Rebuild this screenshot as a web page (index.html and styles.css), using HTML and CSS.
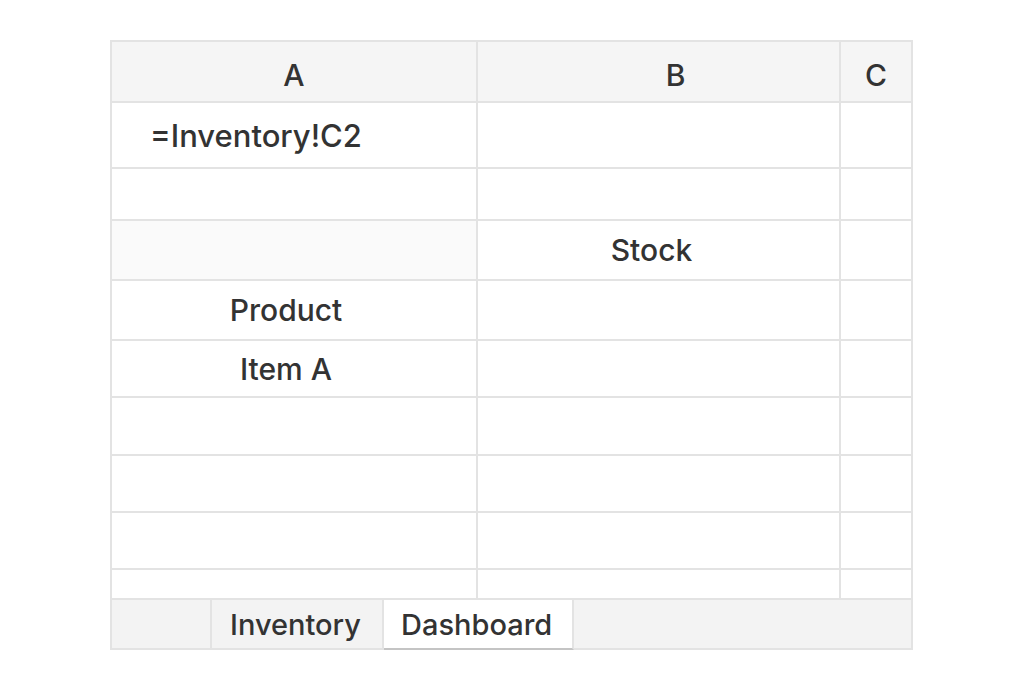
FILE: index.html
```html
<!DOCTYPE html>
<html lang="en">
<head>
  <meta charset="UTF-8">
  <meta name="viewport" content="width=device-width, initial-scale=1.0">
  <title>Dashboard</title>
  <link rel="stylesheet" href="styles.css">
</head>
<body>
<div class="sheet">
  <!-- Cell grid -->
  <div class="grid">
    <div class="cell head">A</div>
    <div class="cell head head-b">B</div>
    <div class="cell head">C</div>

    <div class="cell formula">=Inventory!C2</div>
    <div class="cell"></div>
    <div class="cell"></div>

    <div class="cell"></div>
    <div class="cell"></div>
    <div class="cell"></div>

    <div class="cell shaded"></div>
    <div class="cell center stock">Stock</div>
    <div class="cell"></div>

    <div class="cell center col-a">Product</div>
    <div class="cell"></div>
    <div class="cell"></div>

    <div class="cell center col-a">Item A</div>
    <div class="cell"></div>
    <div class="cell"></div>

    <div class="cell"></div>
    <div class="cell"></div>
    <div class="cell"></div>

    <div class="cell"></div>
    <div class="cell"></div>
    <div class="cell"></div>

    <div class="cell"></div>
    <div class="cell"></div>
    <div class="cell"></div>

    <div class="cell"></div>
    <div class="cell"></div>
    <div class="cell"></div>
  </div>

  <!-- Sheet tabs -->
  <div class="tabs">
    <div class="tab-spacer"></div>
    <div class="tab">Inventory</div>
    <div class="tab active">Dashboard</div>
    <div class="tab-rest"></div>
  </div>
</div>
</body>
</html>
```

FILE: styles.css
```css
/* Page */
body {
  margin: 0;
  padding: 40px 0 0 110px;
  background: #ffffff;
  font-family: "Inter", "Liberation Sans", sans-serif;
  color: #333333;
  -webkit-font-smoothing: antialiased;
}

:root {
  --line: #e3e3e3;
  --head-bg: #f5f5f5;
  --tab-bg: #f3f3f3;
}

.sheet {
  width: 799px;
  border: 2px solid var(--line);
  border-bottom: 0;
  background: var(--line);
}

/* Cell grid */
.grid {
  display: grid;
  grid-template-columns: 364px 361px 70px;
  grid-template-rows: 59px 64px 50px 58px 58px 55px 56px 55px 55px 28px;
  gap: 2px;
}

.cell {
  background: #ffffff;
  font-size: 30px;
  font-weight: 500;
  display: flex;
  align-items: center;
}

.head {
  background: var(--head-bg);
  justify-content: center;
  padding-top: 6px;
}

.head-b {
  padding-left: 34px;
}

.formula {
  padding-left: 38px;
  font-size: 31px;
}

.center {
  justify-content: center;
}

.col-a {
  padding-right: 16px;
}

.stock {
  padding-right: 14px;
}

.shaded {
  background: #fafafa;
}

/* Sheet tabs */
.tabs {
  display: flex;
  height: 48px;
  margin-top: 2px;
  background: var(--tab-bg);
  border-bottom: 2px solid var(--line);
}

.tab-spacer {
  width: 98px;
  border-right: 2px solid var(--line);
}

.tab {
  font-size: 29px;
  font-weight: 500;
  display: flex;
  align-items: center;
  padding: 0 18px;
  width: 134px;
  border-right: 2px solid var(--line);
}

.tab.active {
  background: #ffffff;
  padding: 0 18px 0 17px;
  width: 153px;
  border-bottom: 2px solid #c4c4c4;
  margin-bottom: -2px;
}

.tab-rest {
  flex: 1;
}
```
